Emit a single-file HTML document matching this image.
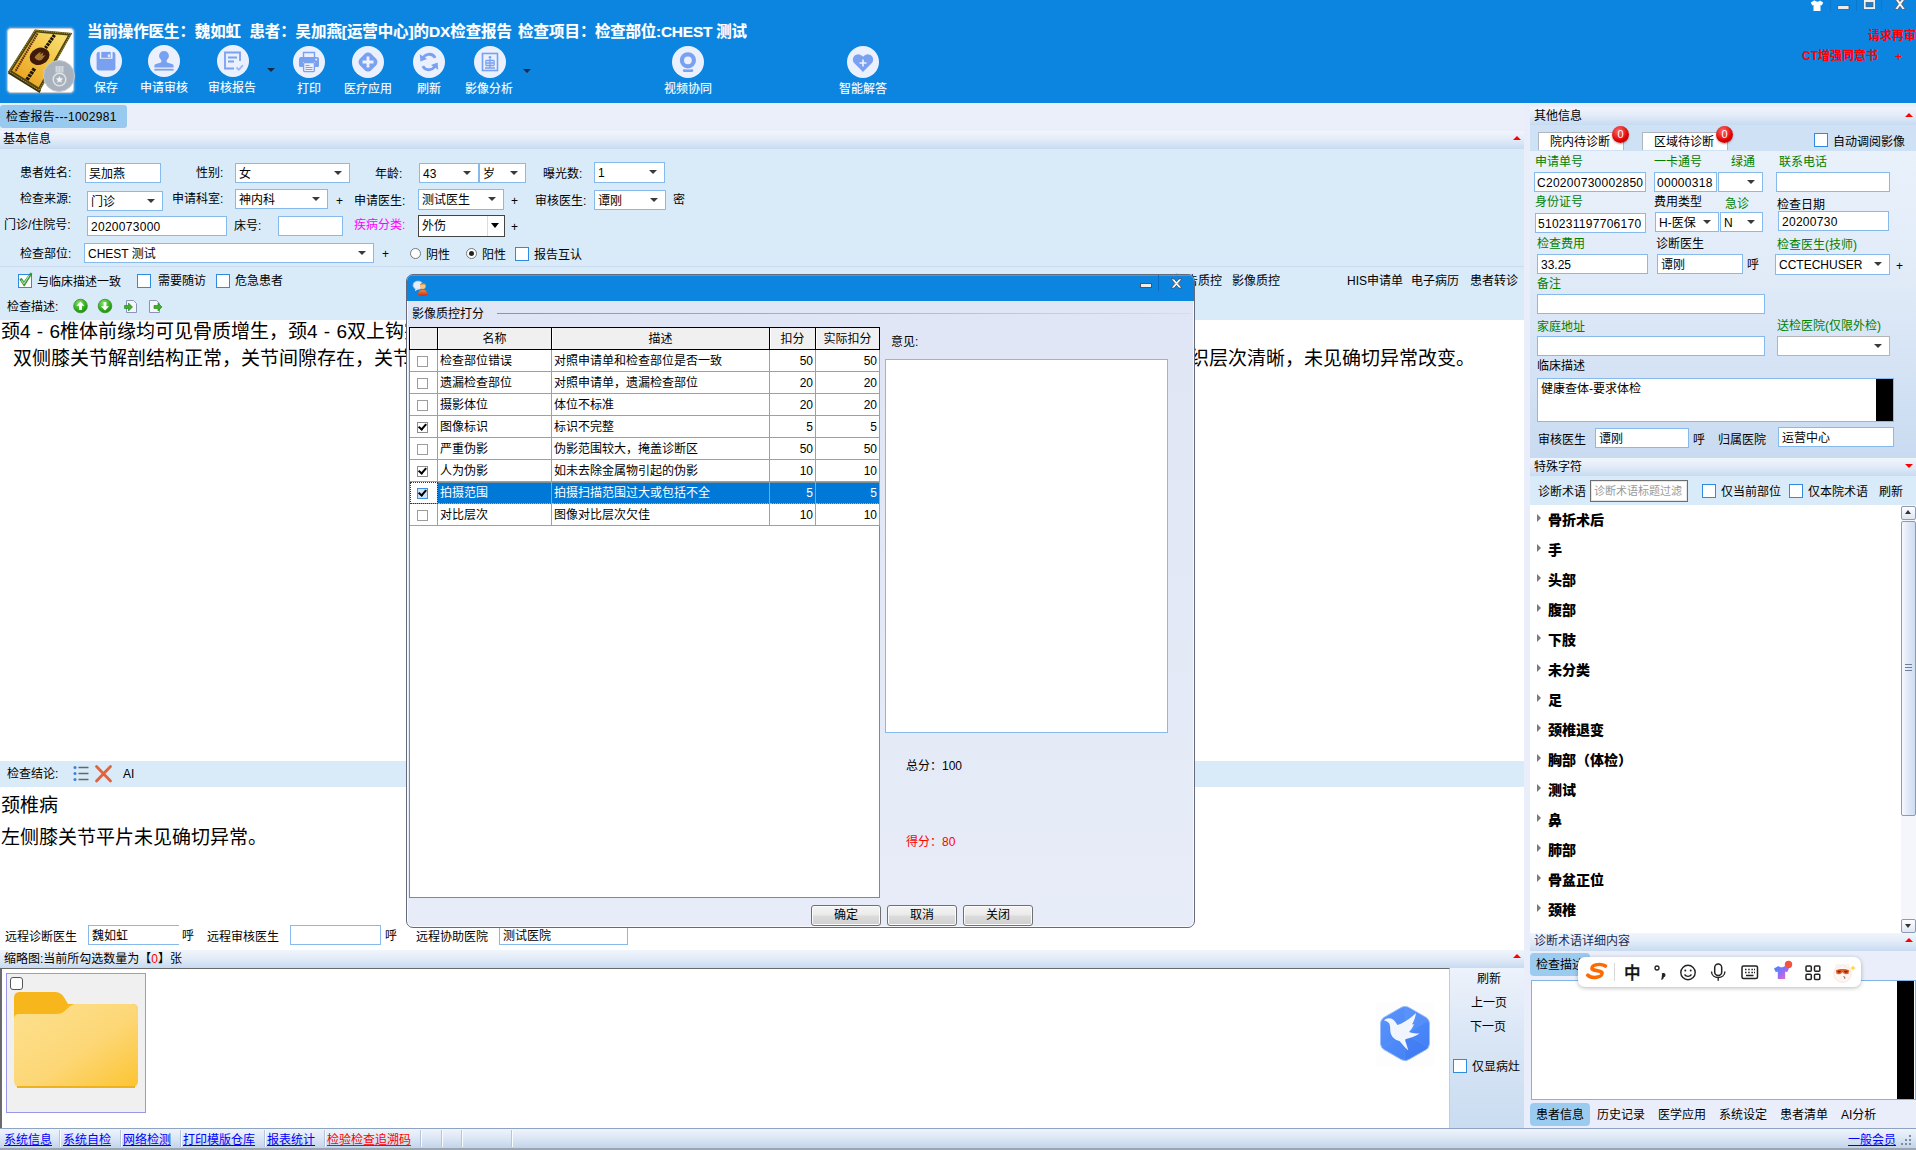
<!DOCTYPE html>
<html lang="zh-CN">
<head>
<meta charset="utf-8">
<title>检查报告</title>
<style>
html,body{margin:0;padding:0}
body{width:1916px;height:1150px;position:relative;overflow:hidden;background:#fff;font:12px/16px "Liberation Sans","Noto Sans CJK SC",sans-serif;color:#000}
div,span{box-sizing:border-box}
.a{position:absolute}
.t{position:absolute;white-space:nowrap;line-height:16px;font-size:12px;padding-top:1px}
.i{position:absolute;background:#fff;border:1px solid #86b9ec;height:20px;line-height:20px;padding-left:3px;white-space:nowrap;overflow:hidden;font-size:12px}
.c::after{content:"";position:absolute;right:7px;top:7px;border-left:4px solid transparent;border-right:4px solid transparent;border-top:4px solid #3a3a3a}
.k{position:absolute;width:14px;height:14px;background:#fff;border:1px solid #2f8be0}
.h{position:absolute;background:linear-gradient(#f1f5fc,#e3ecf8 45%,#c7dbf1);height:19px}
.up{position:absolute;width:0;height:0;border-left:4px solid transparent;border-right:4px solid transparent;border-bottom:4px solid #f00}
.dn{position:absolute;width:0;height:0;border-left:4px solid transparent;border-right:4px solid transparent;border-top:4px solid #f00}
.g{color:#008000}
.d{letter-spacing:.28px}
.w{color:#fff}
.tb{position:absolute;top:45px;width:32px;height:32px}
.tl{position:absolute;top:80px;width:80px;text-align:center;color:#fff;font-size:12px;line-height:16px;white-space:nowrap;text-shadow:0 0 1px rgba(255,255,255,.35)}
.big{position:absolute;white-space:nowrap;font-size:19px;line-height:26px;word-spacing:1px}
</style>
</head>
<body>
<!-- ===== HEADER ===== -->
<div class="a" id="hdr" style="left:0;top:0;width:1916px;height:103px;background:#0b85e0"></div>
<!-- logo -->
<div class="a" style="left:7px;top:28px;width:67px;height:65px;background:#fff;border-radius:4px;border:1px solid #c9ccd2;box-shadow:0 0 2px 1px rgba(255,255,255,.3)"></div>
<svg class="a" style="left:8px;top:28px" width="66" height="65" viewBox="0 0 66 65">
<defs><linearGradient id="cg" x1="1" y1="0" x2="0" y2="1"><stop offset="0" stop-color="#f9e27a"/><stop offset=".45" stop-color="#f3c544"/><stop offset="1" stop-color="#e7991a"/></linearGradient></defs>
<polygon points="0,45.500 31.600,65 33,62 1,42.500" fill="#3a2f08"/>
<polygon points="26.800,1.400 64.300,4.900 31.600,63.600 0,43.800" fill="#4f4410"/>
<polygon points="27.300,2.400 63,5.700 31.200,62.300 1.300,43.500" fill="none" stroke="#d9c04a" stroke-width=".7" stroke-dasharray="1.200 1"/>
<polygon points="28.600,4.600 59.800,7.500 30.600,59.300 4,42.800" fill="url(#cg)"/>
<path d="M29.500 5.500L7.200 43.500" stroke="#5a2a12" stroke-width="2.200" stroke-dasharray="1.600 .7"/>
<path d="M46.500 7L37.500 20" stroke="#1e1606" stroke-width="3.400" stroke-dasharray="2.600 .8"/>
<path d="M26.500 40.500L18.500 52.500" stroke="#1e1606" stroke-width="3.800" stroke-dasharray="2.800 .8"/>
<ellipse cx="31.600" cy="28.300" rx="10.300" ry="8.300" transform="rotate(-25 31.600 28.300)" fill="#3f1a08"/>
<path d="M26.500 29.500c2-3.500 4.500-5 6.500-5.500l-1 2.500 3.500-2-1 3.500 3-1-3.500 4.500c-2 1.500-5 1.500-7.500-2z" fill="#b98a3a" opacity=".85"/>
</svg>
<div class="a" style="left:43px;top:60px;width:32px;height:32px;border-radius:50%;background:#a9b1bc;border:1px solid #c3cbd6"></div>
<svg class="a" style="left:44px;top:60px" width="30" height="32" viewBox="0 0 30 32"><rect x="11.500" y="6" width="8" height="6.500" fill="#d3d8df"/><path d="M14 6v6M17 6v6" stroke="#b9c0ca" stroke-width=".8"/><circle cx="15.500" cy="19.500" r="6.300" fill="none" stroke="#dfe3e9" stroke-width="1.500"/><path d="M15.500 15.900l1.100 2.300 2.500.3-1.800 1.700.5 2.500-2.300-1.200-2.300 1.200.5-2.500-1.800-1.700 2.500-.3z" fill="#f1f3f6"/></svg>
<!-- title -->
<div class="t w" style="left:87px;top:20px;font-size:15.5px;line-height:22px;font-weight:bold;text-shadow:0 0 1px rgba(255,255,255,.4);letter-spacing:-.1px">当前操作医生：魏如虹&nbsp; 患者：吴加燕[运营中心]的DX检查报告</div>
<div class="t w" style="left:518px;top:20px;font-size:15.5px;line-height:22px;font-weight:bold;text-shadow:0 0 1px rgba(255,255,255,.4)">检查项目：</div>
<div class="t w" style="left:595px;top:20px;font-size:15.5px;line-height:22px;font-weight:bold;text-shadow:0 0 1px rgba(255,255,255,.4);letter-spacing:-.25px">检查部位:CHEST 测试</div>
<!-- toolbar icons -->
<svg class="tb" style="left:90px" viewBox="0 0 32 32"><circle cx="16" cy="16" r="16" fill="#eaf0fd"/><rect x="6.600" y="6.900" width="18.800" height="18.500" rx="2.200" fill="#7aa0f0"/><rect x="9.700" y="6" width="12.800" height="7.800" fill="#eaf0fd"/><rect x="11.300" y="6.900" width="9.400" height="5.900" fill="#7aa0f0"/><rect x="17.800" y="9.400" width="2.200" height="2.800" fill="#dfe8fc"/></svg>
<svg class="tb" style="left:148px" viewBox="0 0 32 32"><circle cx="16" cy="16" r="16" fill="#eaf0fd"/><path d="M16 6a4.8 4.8 0 0 1 3.2 8.4c-.9 1-.9 2.6.6 3.4l4.2 1.2c1 .3 1.6 1 1.6 2v1.6h-19.2v-1.6c0-1 .6-1.700 1.600-2l4.200-1.200c1.500-.8 1.500-2.400.6-3.400a4.800 4.800 0 0 1 3.200-8.400z" fill="#7aa0f0"/><rect x="6.4" y="23.8" width="19.200" height="1.800" fill="#7aa0f0"/></svg>
<svg class="tb" style="left:217px" viewBox="0 0 32 32"><circle cx="16" cy="16" r="16" fill="#eaf0fd"/><path d="M23 16v-8.500h-15v16h9" fill="none" stroke="#7aa0f0" stroke-width="1.800"/><path d="M11 12.500h9M11 16.500h6" stroke="#7aa0f0" stroke-width="1.800"/><path d="M19.500 22.500l2.300 2.300 4.200-4.600" fill="none" stroke="#9db8f6" stroke-width="1.800"/></svg>
<div class="a" style="left:267px;top:68px;width:0;height:0;border-left:4px solid transparent;border-right:4px solid transparent;border-top:4px solid #1a2a44"></div>
<svg class="tb" style="left:293px;top:46px" viewBox="0 0 32 32"><circle cx="16" cy="16" r="16" fill="#eaf0fd"/><path d="M10.500 11.500v-5h11v5" fill="none" stroke="#7aa0f0" stroke-width="1.400"/><path d="M8 11h16a2 2 0 0 1 2 2v6.500a1.500 1.500 0 0 1-1.500 1.500h-2.500v-5h-12v5h-2.500a1.500 1.500 0 0 1-1.500-1.500v-6.500a2 2 0 0 1 2-2z" fill="#7aa0f0"/><circle cx="23.200" cy="13.500" r="1" fill="#eaf0fd"/><rect x="10.600" y="16.600" width="10.800" height="9" rx="1" fill="none" stroke="#7aa0f0" stroke-width="1.300"/><path d="M12.500 19.500h4M12.500 21.500h7M12.500 23.500h7" stroke="#7aa0f0" stroke-width="1.100"/></svg>
<svg class="tb" style="left:352px;top:46px" viewBox="0 0 32 32"><circle cx="16" cy="16" r="16" fill="#eaf0fd"/><rect x="8" y="8" width="16" height="16" rx="4.500" transform="rotate(45 16 16)" fill="#7aa0f0"/><path d="M16 10.500v11M10.500 16h11" stroke="#eef2fe" stroke-width="2.800"/></svg>
<svg class="tb" style="left:413px;top:46px" viewBox="0 0 32 32"><circle cx="16" cy="16" r="16" fill="#eaf0fd"/><path d="M9.600 13.500a6.800 6.800 0 0 1 12.600-1.700" fill="none" stroke="#7aa0f0" stroke-width="2.800"/><path d="M22.400 18.500a6.800 6.800 0 0 1-12.600 1.700" fill="none" stroke="#7aa0f0" stroke-width="2.800"/><path d="M6.800 8.200l.6 7.300 6.600-2.600z" fill="#7aa0f0"/><path d="M25.200 23.800l-.6-7.300-6.600 2.600z" fill="#7aa0f0"/></svg>
<svg class="tb" style="left:474px;top:46px" viewBox="0 0 32 32"><circle cx="16" cy="16" r="16" fill="#eaf0fd"/><rect x="8.500" y="7.500" width="15" height="17" fill="none" stroke="#7aa0f0" stroke-width="1.600"/><circle cx="16" cy="11.300" r="1.300" fill="#7aa0f0"/><path d="M16 12.500v9M11.800 14.500h8.400M11.800 17h8.400M11.800 19.500h8.400M11 22h10" stroke="#7aa0f0" stroke-width="1.300"/><path d="M11.800 14.500v5M20.200 14.500v5" stroke="#7aa0f0" stroke-width="1.100"/></svg>
<div class="a" style="left:523px;top:69px;width:0;height:0;border-left:4px solid transparent;border-right:4px solid transparent;border-top:4px solid #1a2a44"></div>
<svg class="tb" style="left:672px;top:46px" viewBox="0 0 32 32"><circle cx="16" cy="16" r="16" fill="#eaf0fd"/><circle cx="15.900" cy="14.300" r="6" fill="none" stroke="#7aa0f0" stroke-width="4.200"/><path d="M10.900 24.200c0-.7.500-1.100 1.200-1 2.700.5 5.200.5 7.900 0 .7-.1 1.200.3 1.200 1v.6c0 .7-.5 1.200-1.200 1.200h-7.900c-.7 0-1.200-.5-1.200-1.200z" fill="#7aa0f0"/></svg>
<svg class="tb" style="left:847px;top:46px" viewBox="0 0 32 32"><circle cx="16" cy="16" r="16" fill="#eaf0fd"/><path d="M16 26l-8.600-8.800a5.300 5.300 0 0 1 7.500-7.500l1.100 1.100 1.100-1.100a5.300 5.300 0 0 1 7.500 7.500z" fill="#7aa0f0"/><path d="M16 13.500v7M12.500 17h7" stroke="#eef2fe" stroke-width="1.600"/></svg>
<div class="tl" style="left:66px">保存</div>
<div class="tl" style="left:124px">申请审核</div>
<div class="tl" style="left:192px">审核报告</div>
<div class="tl" style="left:269px;top:81px">打印</div>
<div class="tl" style="left:328px;top:81px">医疗应用</div>
<div class="tl" style="left:389px;top:81px">刷新</div>
<div class="tl" style="left:449px;top:81px">影像分析</div>
<div class="tl" style="left:648px;top:81px">视频协同</div>
<div class="tl" style="left:823px;top:81px">智能解答</div>
<!-- window controls -->
<svg class="a" style="left:1806px;top:0" width="110" height="14" viewBox="0 0 110 14"><path d="M8 0.500l-3.200 2 1.400 3 1.300-.6v6.100h7v-6.100l1.300.6 1.400-3-3.200-2c-.7 1.500-4.300 1.500-5 0z" fill="#fff"/><path d="M24.500 0v11M50.500 0v11M75.500 0v11" stroke="#0a78cc" stroke-width="1"/><rect x="31.700" y="5.500" width="11.300" height="4" fill="#ececec" stroke="#5a4f55" stroke-width=".8"/><rect x="58.700" y="1" width="9.600" height="7.200" fill="none" stroke="#f0f0f0" stroke-width="2.400"/><rect x="57.400" y="-.4" width="12.200" height="10" fill="none" stroke="#5a4f55" stroke-width=".7"/><rect x="60" y="2.300" width="7" height="4.600" fill="none" stroke="#5a4f55" stroke-width=".5"/><path d="M88.500 -1.500h3.200l2.300 3 2.300-3h3.200l-3.900 5.500 3.900 5.500h-3.200l-2.300-3.200-2.300 3.200h-3.200l3.900-5.500z" fill="#f6f6f6" stroke="#5a4f55" stroke-width=".8"/></svg>
<div class="t" style="left:1868px;top:27px;color:#f00;font-weight:bold">请求再审</div>
<div class="t" style="left:1802px;top:47px;color:#f00;font-weight:bold">CT增强同意书</div>
<div class="t" style="left:1895px;top:48px;color:#f00">+</div>
<!--HEADER-CONTENT-->
<!-- ===== LEFT MAIN ===== -->
<!-- lavender base behind panels -->
<div class="a" style="left:0;top:103px;width:1916px;height:1025px;background:#e9eefa"></div>
<!-- tab bar -->
<div class="a" style="left:0;top:103px;width:1524px;height:26px;background:#ebeffa"></div>
<div class="a" style="left:0;top:105px;width:127px;height:23px;background:#98c9ef;border-radius:3px"></div>
<div class="t" style="left:6px;top:108px;letter-spacing:.28px">检查报告---1002981</div>
<!-- 基本信息 header -->
<div class="h" style="left:0;top:131px;width:1524px;height:18px"></div>
<div class="t" style="left:3px;top:130px">基本信息</div>
<div class="up" style="left:1513px;top:136px"></div>
<!-- form bg -->
<div class="a" style="left:0;top:149px;width:1524px;height:171px;background:#d9ebf9"></div>
<div class="a" style="left:0;top:266px;width:1524px;height:2px;background:#cbdcf1"></div>
<div class="a" style="left:0;top:267px;width:1524px;height:53px;background:#d9ebf9"></div>
<!-- row 1 -->
<div class="t" style="left:20px;top:164px">患者姓名:</div>
<div class="i" style="left:85px;top:163px;width:76px">吴加燕</div>
<div class="t" style="left:196px;top:164px">性别:</div>
<div class="i c" style="left:235px;top:163px;width:115px">女</div>
<div class="t" style="left:375px;top:165px">年龄:</div>
<div class="i c" style="left:419px;top:163px;width:60px">43</div>
<div class="i c" style="left:479px;top:163px;width:47px">岁</div>
<div class="t" style="left:543px;top:165px">曝光数:</div>
<div class="i c" style="left:594px;top:162px;width:71px;height:21px">1</div>
<!-- row 2 -->
<div class="t" style="left:20px;top:190px">检查来源:</div>
<div class="i c" style="left:87px;top:191px;width:76px">门诊</div>
<div class="t" style="left:172px;top:190px">申请科室:</div>
<div class="i c" style="left:235px;top:189px;width:93px">神内科</div>
<div class="t" style="left:336px;top:192px">+</div>
<div class="t" style="left:354px;top:192px">申请医生:</div>
<div class="i c" style="left:418px;top:189px;width:86px;height:21px">测试医生</div>
<div class="t" style="left:511px;top:192px">+</div>
<div class="t" style="left:535px;top:192px">审核医生:</div>
<div class="i c" style="left:594px;top:190px;width:72px">谭刚</div>
<div class="t" style="left:673px;top:191px">密</div>
<!-- row 3 -->
<div class="t" style="left:4px;top:216px">门诊/住院号:</div>
<div class="i" style="left:87px;top:216px;width:140px;letter-spacing:.28px">2020073000</div>
<div class="t" style="left:234px;top:217px">床号:</div>
<div class="i" style="left:278px;top:216px;width:65px"></div>
<div class="t" style="left:354px;top:216px;color:#f0f">疾病分类:</div>
<div class="i" style="left:418px;top:215px;width:87px;height:22px;border-color:#444;line-height:20px">外伤<span class="a" style="right:0;top:0;width:17px;height:20px;border-left:1px solid #dcdcdc"></span><span class="a" style="right:5px;top:7px;border-left:4px solid transparent;border-right:4px solid transparent;border-top:5px solid #000"></span></div>
<div class="t" style="left:511px;top:218px">+</div>
<!-- row 4 -->
<div class="t" style="left:20px;top:245px">检查部位:</div>
<div class="i c" style="left:84px;top:243px;width:290px">CHEST 测试</div>
<div class="t" style="left:382px;top:245px">+</div>
<div class="a" style="left:410px;top:248px;width:11px;height:11px;border-radius:50%;background:#fff;border:1px solid #777"></div>
<div class="t" style="left:426px;top:246px">阴性</div>
<div class="a" style="left:466px;top:248px;width:11px;height:11px;border-radius:50%;background:#fff;border:1px solid #777"></div>
<div class="a" style="left:469px;top:251px;width:5px;height:5px;border-radius:50%;background:#222"></div>
<div class="t" style="left:482px;top:246px">阳性</div>
<div class="k" style="left:515px;top:247px"></div>
<div class="t" style="left:534px;top:246px">报告互认</div>
<!-- checkbox row -->
<div class="k" style="left:18px;top:274px"></div>
<svg class="a" style="left:18px;top:271px" width="16" height="17" viewBox="0 0 16 17"><path d="M1.800 8.500l1.800-1.200 2.300 3.600 6.600-9 1.500.8-7.800 12.500z" fill="#3aa536" stroke="#1f7a1f" stroke-width=".6"/><path d="M3.500 9.300l2.300 3.600 5.500-8.600" fill="none" stroke="#c9efc4" stroke-width=".9"/></svg>
<div class="t" style="left:37px;top:273px">与临床描述一致</div>
<div class="k" style="left:137px;top:274px"></div>
<div class="t" style="left:158px;top:272px">需要随访</div>
<div class="k" style="left:216px;top:274px"></div>
<div class="t" style="left:235px;top:272px">危急患者</div>
<div class="t" style="left:1174px;top:272px">报告质控</div>
<div class="t" style="left:1232px;top:272px">影像质控</div>
<div class="t" style="left:1347px;top:272px">HIS申请单</div>
<div class="t" style="left:1411px;top:272px">电子病历</div>
<div class="t" style="left:1470px;top:272px">患者转诊</div>
<!-- 检查描述 row -->
<div class="t" style="left:7px;top:298px">检查描述:</div>
<svg class="a" style="left:72px;top:297px" width="92" height="18" viewBox="0 0 92 18">
<defs><radialGradient id="gg" cx=".4" cy=".3" r=".8"><stop offset="0" stop-color="#8be26a"/><stop offset=".6" stop-color="#2fae1c"/><stop offset="1" stop-color="#1b7d10"/></radialGradient></defs>
<circle cx="8.500" cy="9" r="6.800" fill="url(#gg)" stroke="#3a8f2a" stroke-width=".8"/><path d="M8.500 4.500l4 4.200h-2.600v4.300h-2.800v-4.300h-2.600z" fill="#fff"/>
<circle cx="33" cy="9" r="6.800" fill="url(#gg)" stroke="#3a8f2a" stroke-width=".8"/><path d="M33 13.500l4-4.200h-2.600v-4.300h-2.800v4.300h-2.600z" fill="#fff"/>
<path d="M54.500 3.500h7l3 3v9h-10z" fill="#f4f6fb" stroke="#8a93b8" stroke-width="1"/><path d="M52.500 8.500h4v-2.500l4 4-4 4v-2.500h-4z" fill="#3fb02a" stroke="#1f7f14" stroke-width=".6"/>
<path d="M77.500 3.500h7l3 3v9h-10z" fill="#f4f6fb" stroke="#8a93b8" stroke-width="1"/><path d="M82 8.500h4v-2.500l4 4-4 4v-2.500h-4z" fill="#3fb02a" stroke="#1f7f14" stroke-width=".6"/>
</svg>
<!-- description text area -->
<div class="a" style="left:0;top:320px;width:1524px;height:441px;background:#fff"></div>
<div class="big" style="left:1px;top:319px">颈4 - 6椎体前缘均可见骨质增生，颈4 - 6双上钩突关节变尖，椎间隙未见明显狭窄，项韧带未见钙化。</div>
<div class="big" style="left:13px;top:346px">双侧膝关节解剖结构正常，关节间隙存在，关节面光滑，未见骨质增生及破坏征象。</div>
<div class="big" style="right:441px;top:346px">周围软组织层次清晰，未见确切异常改变。</div>
<!-- 检查结论 bar -->
<div class="a" style="left:0;top:761px;width:1524px;height:26px;background:#d9ebf9"></div>
<div class="t" style="left:7px;top:765px">检查结论:</div>
<svg class="a" style="left:72px;top:764px" width="42" height="20" viewBox="0 0 42 20"><circle cx="3" cy="3.500" r="1.500" fill="#3f7fd0"/><circle cx="3" cy="9.500" r="1.500" fill="#3f7fd0"/><circle cx="3" cy="15.500" r="1.500" fill="#3f7fd0"/><path d="M6.500 3.500h10M6.500 9.500h10M6.500 15.500h10" stroke="#666" stroke-width="1.400"/><path d="M24.500 2.500l14 14.500M38.500 2.500l-14 14.500" stroke="#e0623f" stroke-width="2.800" stroke-linecap="round"/></svg>
<div class="t" style="left:123px;top:765px">AI</div>
<!-- conclusion text -->
<div class="a" style="left:0;top:787px;width:1524px;height:133px;background:#fff"></div>
<div class="big" style="left:1px;top:793px">颈椎病</div>
<div class="big" style="left:1px;top:825px">左侧膝关节平片未见确切异常。</div>
<!-- remote row -->
<div class="a" style="left:0;top:920px;width:1524px;height:30px;background:#fff"></div>
<div class="t" style="left:5px;top:928px">远程诊断医生</div>
<div class="i" style="left:88px;top:925px;width:91px;border-right:none">魏如虹</div>
<div class="t" style="left:182px;top:927px">呼</div>
<div class="t" style="left:207px;top:928px">远程审核医生</div>
<div class="i" style="left:290px;top:925px;width:91px"></div>
<div class="t" style="left:385px;top:927px">呼</div>
<div class="t" style="left:416px;top:928px">远程协助医院</div>
<div class="i" style="left:499px;top:925px;width:129px">测试医院</div>
<!--LEFT-->
<!-- ===== RIGHT PANEL ===== -->
<!-- right panel bg -->
<div class="a" style="left:1530px;top:107px;width:386px;height:1021px;background:#e6eefa"></div>
<div class="a" style="left:1530px;top:151px;width:386px;height:307px;background:linear-gradient(#e9f1fb,#e1ebf8 40%,#c9dbf1)"></div>
<div class="h" style="left:1530px;top:107px;width:386px;height:18px"></div>
<div class="t" style="left:1534px;top:107px">其他信息</div>
<div class="up" style="left:1905px;top:113px"></div>
<div class="a" style="left:1530px;top:125px;width:386px;height:26px;background:#cfe2f5"></div>
<div class="a" style="left:1538px;top:132px;width:86px;height:18px;background:#fff;border:1px solid #adb5c0;border-bottom:none"></div>
<div class="t" style="left:1550px;top:133px">院内待诊断</div>
<div class="a" style="left:1642px;top:132px;width:86px;height:18px;background:#fff;border:1px solid #adb5c0;border-bottom:none"></div>
<div class="t" style="left:1654px;top:133px">区域待诊断</div>
<div class="a" style="left:1612px;top:126px;width:17px;height:17px;border-radius:50%;background:radial-gradient(circle at 40% 30%,#ff6a6a,#e00000 60%,#b00000);box-shadow:0 1px 2px rgba(0,0,0,.35);color:#fff;font-size:11px;line-height:16px;text-align:center">0</div>
<div class="a" style="left:1716px;top:126px;width:17px;height:17px;border-radius:50%;background:radial-gradient(circle at 40% 30%,#ff6a6a,#e00000 60%,#b00000);box-shadow:0 1px 2px rgba(0,0,0,.35);color:#fff;font-size:11px;line-height:16px;text-align:center">0</div>
<div class="k" style="left:1814px;top:133px"></div>
<div class="t" style="left:1833px;top:133px">自动调阅影像</div>
<!-- form -->
<div class="t g" style="left:1535px;top:153px">申请单号</div>
<div class="t g" style="left:1654px;top:153px">一卡通号</div>
<div class="t g" style="left:1731px;top:153px">绿通</div>
<div class="t g" style="left:1779px;top:153px">联系电话</div>
<div class="i d" style="left:1534px;top:172px;width:112px;padding-left:2px">C20200730002850</div>
<div class="i d" style="left:1654px;top:172px;width:63px;padding-left:2px">00000318</div>
<div class="i c" style="left:1718px;top:172px;width:45px"></div>
<div class="i" style="left:1776px;top:172px;width:114px"></div>
<div class="t g" style="left:1535px;top:193px">身份证号</div>
<div class="t" style="left:1654px;top:193px">费用类型</div>
<div class="t g" style="left:1725px;top:195px">急诊</div>
<div class="t" style="left:1777px;top:196px">检查日期</div>
<div class="i d" style="left:1535px;top:213px;width:111px;padding-left:2px">510231197706170</div>
<div class="i c" style="left:1655px;top:212px;width:64px">H-医保</div>
<div class="i c" style="left:1720px;top:212px;width:43px">N</div>
<div class="i" style="left:1778px;top:211px;width:111px;letter-spacing:.28px">20200730</div>
<div class="t g" style="left:1537px;top:235px">检查费用</div>
<div class="t" style="left:1656px;top:235px">诊断医生</div>
<div class="t g" style="left:1777px;top:236px">检查医生(技师)</div>
<div class="i" style="left:1537px;top:254px;width:111px">33.25</div>
<div class="i" style="left:1657px;top:254px;width:86px">谭刚</div>
<div class="t" style="left:1747px;top:256px">呼</div>
<div class="i c" style="left:1775px;top:254px;width:115px;height:21px">CCTECHUSER</div>
<div class="t" style="left:1896px;top:257px">+</div>
<div class="t g" style="left:1537px;top:275px">备注</div>
<div class="i" style="left:1537px;top:294px;width:228px"></div>
<div class="t g" style="left:1537px;top:318px">家庭地址</div>
<div class="t g" style="left:1777px;top:317px">送检医院(仅限外检)</div>
<div class="i" style="left:1537px;top:336px;width:228px"></div>
<div class="i c" style="left:1777px;top:336px;width:113px;border-color:#b4b4b4"></div>
<div class="t" style="left:1537px;top:357px">临床描述</div>
<div class="i" style="left:1537px;top:378px;width:357px;height:44px">健康查体-要求体检</div>
<div class="a" style="left:1876px;top:379px;width:17px;height:42px;background:#000"></div>
<div class="t" style="left:1538px;top:431px">审核医生</div>
<div class="i" style="left:1595px;top:428px;width:94px">谭刚</div>
<div class="t" style="left:1693px;top:431px">呼</div>
<div class="t" style="left:1718px;top:431px">归属医院</div>
<div class="i" style="left:1778px;top:427px;width:116px">运营中心</div>
<!-- 特殊字符 -->
<div class="h" style="left:1530px;top:458px;width:386px;height:18px"></div>
<div class="t" style="left:1534px;top:458px">特殊字符</div>
<div class="dn" style="left:1905px;top:464px"></div>
<div class="a" style="left:1530px;top:476px;width:386px;height:29px;background:#d9ebf9"></div>
<div class="t" style="left:1538px;top:483px">诊断术语</div>
<div class="i" style="left:1590px;top:480px;width:98px;height:22px;border:1px solid #6e6e6e;box-shadow:inset 0 0 0 1px #e6e6e6;color:#9a9a9a;line-height:20px;font-size:11px">诊断术语标题过滤</div>
<div class="k" style="left:1702px;top:484px"></div>
<div class="t" style="left:1721px;top:483px">仅当前部位</div>
<div class="k" style="left:1789px;top:484px"></div>
<div class="t" style="left:1808px;top:483px">仅本院术语</div>
<div class="t" style="left:1879px;top:483px">刷新</div>
<!-- tree -->
<div class="a" id="tree" style="left:1530px;top:505px;width:386px;height:428px;background:#fff;font-weight:bold;font-size:14px">
<style>#tree i{position:absolute;left:7px;width:0;height:0;border-top:4px solid transparent;border-bottom:4px solid transparent;border-left:4px solid #7a7a7a}#tree b{position:absolute;left:18px;white-space:nowrap;line-height:18px}</style>
<i style="top:9px"></i><b style="top:6px">骨折术后</b>
<i style="top:39px"></i><b style="top:36px">手</b>
<i style="top:69px"></i><b style="top:66px">头部</b>
<i style="top:99px"></i><b style="top:96px">腹部</b>
<i style="top:129px"></i><b style="top:126px">下肢</b>
<i style="top:159px"></i><b style="top:156px">未分类</b>
<i style="top:189px"></i><b style="top:186px">足</b>
<i style="top:219px"></i><b style="top:216px">颈椎退变</b>
<i style="top:249px"></i><b style="top:246px">胸部（体检）</b>
<i style="top:279px"></i><b style="top:276px">测试</b>
<i style="top:309px"></i><b style="top:306px">鼻</b>
<i style="top:339px"></i><b style="top:336px">肺部</b>
<i style="top:369px"></i><b style="top:366px">骨盆正位</b>
<i style="top:399px"></i><b style="top:396px">颈椎</b>
</div>
<!-- scrollbar -->
<div class="a" style="left:1901px;top:505px;width:15px;height:428px;background:#f4f6fb"></div>
<div class="a" style="left:1901px;top:506px;width:15px;height:14px;background:linear-gradient(#fdfdff,#dfe6f3);border:1px solid #8d9ab0;border-radius:2px"></div>
<div class="a" style="left:1905px;top:510px;width:0;height:0;border-left:3.500px solid transparent;border-right:3.500px solid transparent;border-bottom:4px solid #333"></div>
<div class="a" style="left:1901px;top:521px;width:15px;height:295px;background:linear-gradient(90deg,#f6f9fe,#dfe8f6 50%,#cfdcf0);border:1px solid #8d9ab0;border-radius:2px"></div>
<div class="a" style="left:1905px;top:664px;width:7px;height:1px;background:#6f7f99;box-shadow:0 3px 0 #6f7f99,0 6px 0 #6f7f99"></div>
<div class="a" style="left:1901px;top:919px;width:15px;height:14px;background:linear-gradient(#fdfdff,#dfe6f3);border:1px solid #8d9ab0;border-radius:2px"></div>
<div class="a" style="left:1905px;top:924px;width:0;height:0;border-left:3.500px solid transparent;border-right:3.500px solid transparent;border-top:4px solid #333"></div>
<!-- 诊断术语详细内容 -->
<div class="h" style="left:1530px;top:933px;width:386px;height:18px"></div>
<div class="t" style="left:1534px;top:932px;color:#1a2a55">诊断术语详细内容</div>
<div class="up" style="left:1905px;top:938px"></div>
<div class="a" style="left:1530px;top:951px;width:386px;height:177px;background:#e9eefa"></div>
<div class="a" style="left:1530px;top:953px;width:60px;height:23px;background:#9ccbf0;border-radius:4px"></div>
<div class="t" style="left:1536px;top:956px">检查描述</div>
<div class="a" style="left:1531px;top:980px;width:385px;height:120px;background:#fff;border:1px solid #7eb4ea"></div>
<div class="a" style="left:1897px;top:981px;width:17px;height:118px;background:#000"></div>
<div class="a" style="left:1530px;top:1103px;width:60px;height:23px;background:#9ccbf0;border-radius:4px"></div>
<div class="t" style="left:1536px;top:1106px">患者信息</div>
<div class="t" style="left:1597px;top:1106px">历史记录</div>
<div class="t" style="left:1658px;top:1106px">医学应用</div>
<div class="t" style="left:1719px;top:1106px">系统设定</div>
<div class="t" style="left:1780px;top:1106px">患者清单</div>
<div class="t" style="left:1841px;top:1106px">AI分析</div>
<!-- IME toolbar -->
<div class="a" style="left:1578px;top:957px;width:283px;height:30px;background:#fff;border-radius:7px;box-shadow:0 1px 4px rgba(0,0,0,.28)"></div>
<svg class="a" style="left:1578px;top:957px" width="283" height="30" viewBox="0 0 283 30">
<path d="M26 9.200c-2.200-1.600-7-2.200-10.500-1.200-3.600 1-3.600 4.200-.2 5l6.200 1.400c3.800.9 3.400 4.600-.8 5.600-3.900.9-8.600-.1-10.800-2" fill="none" stroke="#ff6a00" stroke-width="3.400" stroke-linecap="round" transform="translate(3.500 0) skewX(-12)"/>
<path d="M36.500 6v18" stroke="#d8d8d8" stroke-width="1"/>
<text x="46" y="21.500" font-family="Liberation Sans,Noto Sans CJK SC,sans-serif" font-size="16.500" font-weight="500" fill="#111" stroke="#111" stroke-width=".35">中</text>
<circle cx="79" cy="11" r="2" fill="none" stroke="#222" stroke-width="1.300"/><path d="M84 17.200a1.600 1.600 0 1 1 1.300 2.500c0 1.300-.8 2.300-1.800 2.800" fill="#222" stroke="#222" stroke-width="1.200"/>
<circle cx="110" cy="15.500" r="7.200" fill="none" stroke="#222" stroke-width="1.400"/><circle cx="107.300" cy="13.500" r="1" fill="#222"/><circle cx="112.700" cy="13.500" r="1" fill="#222"/><path d="M106.500 17.500c1.700 2.400 5.300 2.400 7 0" fill="none" stroke="#222" stroke-width="1.300"/>
<rect x="136.700" y="7" width="7" height="11.500" rx="3.500" fill="none" stroke="#222" stroke-width="1.500"/><path d="M133.500 14.500c0 8 13.400 8 13.400 0M140.200 20.500v3.200" fill="none" stroke="#222" stroke-width="1.400"/>
<rect x="164" y="9" width="15.500" height="12.500" rx="1.500" fill="none" stroke="#222" stroke-width="1.500"/><path d="M167 12.500h1.500M170.200 12.500h1.500M173.400 12.500h1.500M176 12.500h1M167 15.500h1.500M170.200 15.500h1.500M173.400 15.500h1.500M176 15.500h1M168 18.500h7.500" stroke="#222" stroke-width="1.300"/>
<defs><linearGradient id="sh" x1="0" y1="0" x2="1" y2="1"><stop offset="0" stop-color="#3a8bff"/><stop offset=".55" stop-color="#9a6cf5"/><stop offset="1" stop-color="#ff6fb0"/></linearGradient></defs>
<path d="M196 11.500l4.500-2.500c1.300 1.800 4.700 1.800 6 0l4.500 2.500-1.800 3.800-2-.9v7.600h-7.400v-7.600l-2 .9z" fill="url(#sh)"/><circle cx="210.500" cy="7.500" r="3.700" fill="#f4523b"/>
<rect x="228" y="9" width="5.300" height="5.300" rx="1" fill="none" stroke="#222" stroke-width="1.500"/><rect x="236.500" y="9" width="5.300" height="5.300" rx="1" fill="none" stroke="#222" stroke-width="1.500"/><rect x="228" y="17.200" width="5.300" height="5.300" rx="1" fill="none" stroke="#222" stroke-width="1.500"/><rect x="236.500" y="17.200" width="5.300" height="5.300" rx="1" fill="none" stroke="#222" stroke-width="1.500"/>
<circle cx="264.500" cy="16.500" r="8.800" fill="#fdf6f2" stroke="#f3e2dc" stroke-width=".8"/><path d="M257.500 11.500l1.500-4.500 4 2.500zM271.500 11.500l-1.500-4.500-4 2.500z" fill="#fdf6f2" stroke="#f3e2dc" stroke-width=".5"/><path d="M257.800 13.200c4-1.600 9.500-1.600 13.500 0l-.8 3.600c-1.800.8-3.800.6-5-.6l-1-1-1 1c-1.200 1.200-3.200 1.400-5 .6z" fill="#ea5f22"/><path d="M259.500 13.800h3.500l-.8 1.800h-2.200zM266 13.800h3.800l-.5 1.800h-2.500z" fill="#6a2a0e"/><path d="M265.500 19.500l1.500 1-.3 1.200" fill="none" stroke="#7a3a1a" stroke-width=".9"/><path d="M275 8l.9 2.100 2.100.9-2.100.9-.9 2.100-.9-2.100-2.100-.9 2.100-.9z" fill="#ffd84a"/>
</svg>
<!--RIGHT-->
<!-- ===== BOTTOM ===== -->
<!-- thumbnail header -->
<div class="h" style="left:0;top:950px;width:1524px;height:18px"></div>
<div class="t" style="left:4px;top:950px">缩略图:当前所勾选数量为【<span style="color:#f00">0</span>】张</div>
<div class="up" style="left:1513px;top:954px"></div>
<!-- thumbnail area -->
<div class="a" style="left:0;top:968px;width:1450px;height:160px;background:#fff;border-left:2px solid #6a6a6a;border-top:1px solid #6a6a6a;border-right:1px solid #c3ccd9"></div>
<div class="a" style="left:6px;top:973px;width:140px;height:140px;background:#f0f0f0;border:1px solid #9a96ea"></div>
<div class="a" style="left:10px;top:977px;width:13px;height:13px;background:#fff;border:1px solid #555;border-radius:3px"></div>
<svg class="a" style="left:14px;top:991px" width="125" height="98" viewBox="0 0 125 98">
<defs><linearGradient id="fd" x1="0" y1="0" x2="1" y2="1"><stop offset="0" stop-color="#fce08e"/><stop offset=".55" stop-color="#fdd776"/><stop offset="1" stop-color="#fcc431"/></linearGradient></defs>
<path d="M6 1h35c5 0 8 3 10 7l3 5h64c4 0 6 2 6 6v10h-124v-22c0-4 2-6 6-6z" fill="#f7b71c"/>
<path d="M0 28c0-3 2-5 5-5h37c5 0 8-2 11-5 3-3 5-5 10-5h54c4 0 7 2 7 6v71c0 4-3 7-7 7h-110c-4 0-7-3-7-7z" fill="url(#fd)"/>
<path d="M3 96h118" stroke="#eeb21f" stroke-width="2"/>
</svg>
<!-- right buttons column -->
<div class="a" style="left:1450px;top:968px;width:74px;height:160px;background:linear-gradient(#edf2fb,#dbe7f6 40%,#c9dcf1)"></div>
<div class="t" style="left:1477px;top:970px">刷新</div>
<div class="t" style="left:1471px;top:994px">上一页</div>
<div class="t" style="left:1470px;top:1018px">下一页</div>
<div class="k" style="left:1453px;top:1059px"></div>
<div class="t" style="left:1472px;top:1058px">仅显病灶</div>
<!-- bird icon -->
<svg class="a" style="left:1376px;top:1002px" width="58" height="64" viewBox="0 0 58 64">
<defs><linearGradient id="bh" x1="0" y1="0" x2="1" y2="1"><stop offset="0" stop-color="#5b95fb"/><stop offset="1" stop-color="#3f7df5"/></linearGradient></defs>
<rect x="0" y="0" width="58" height="64" fill="#fdfdfe"/>
<path d="M29 4.500c1.500 0 2.800.4 4 1.100l16.500 9.500c2.400 1.400 4 4 4 6.900v19c0 2.900-1.600 5.500-4 6.900l-16.500 9.500c-2.500 1.400-5.500 1.400-8 0l-16.500-9.500c-2.400-1.400-4-4-4-6.900v-19c0-2.900 1.600-5.500 4-6.900l16.500-9.500c1.200-.7 2.500-1.100 4-1.100z" fill="url(#bh)" stroke="#9bbdfb" stroke-width="1"/>
<path d="M29 5v27l24-14M29 32l-24-14M29 32v27M29 32l24 14M29 32l-24 14" fill="none" stroke="#6ea2fb" stroke-width=".5" opacity=".5"/><path d="M29 5l24 13-24 14z" fill="#6a9dfb" opacity=".35"/><path d="M29 32l24 14-24 13z" fill="#3a74ec" opacity=".3"/>
<path d="M8 18.500C10 16 14 15.500 17 17.500C19 19 20 21 21.500 23C28 21 35 16 40 11C39.500 15 38 19 36 22.500L38 22C37 25 35 28 33 30C36 31 40 31.500 43.500 31.500C40 34 35 36 30 37C29 37.500 29 38.500 29.500 39.500C30.500 42.500 31.500 45.500 32.300 48.500C29 45.500 26 42 23.500 39C19 38 15.500 35 14.500 30.500C14 27.500 14.500 24.500 13.500 22C13 20.500 11 19 8 18.500Z" fill="#f1f5fe"/>
</svg>
<!-- status bar -->
<div class="a" style="left:0;top:1128px;width:1916px;height:22px;background:linear-gradient(#eff4fc,#dbe6f5 50%,#c3d4ea);border-top:1px solid #8ea3c2;border-bottom:2px solid #9aa4b3"></div>
<div class="t" style="left:4px;top:1131px;color:#00f;text-decoration:underline">系统信息</div>
<div class="t" style="left:63px;top:1131px;color:#00f;text-decoration:underline">系统自检</div>
<div class="t" style="left:123px;top:1131px;color:#00f;text-decoration:underline">网络检测</div>
<div class="t" style="left:183px;top:1131px;color:#00f;text-decoration:underline">打印模版仓库</div>
<div class="t" style="left:267px;top:1131px;color:#00f;text-decoration:underline">报表统计</div>
<div class="t" style="left:327px;top:1131px;color:#f00;text-decoration:underline">检验检查追溯码</div>
<div class="a" style="left:59px;top:1130px;width:1px;height:17px;background:#b3c4dc;box-shadow:61px 0 0 #b3c4dc,121px 0 0 #b3c4dc,205px 0 0 #b3c4dc,265px 0 0 #b3c4dc,361px 0 0 #b3c4dc,382px 0 0 #b3c4dc,402px 0 0 #b3c4dc,452px 0 0 #b3c4dc"></div>
<div class="a" style="left:60px;top:1130px;width:1px;height:17px;background:#fafcff;box-shadow:61px 0 0 #fafcff,121px 0 0 #fafcff,205px 0 0 #fafcff,265px 0 0 #fafcff,361px 0 0 #fafcff,382px 0 0 #fafcff,402px 0 0 #fafcff,452px 0 0 #fafcff"></div>
<div class="t" style="left:1848px;top:1131px;color:#00f;text-decoration:underline">一般会员</div>
<svg class="a" style="left:1900px;top:1134px" width="14" height="14" viewBox="0 0 14 14"><g fill="#7d8ba3"><rect x="9" y="9" width="2" height="2"/><rect x="9" y="5" width="2" height="2"/><rect x="9" y="1" width="2" height="2"/><rect x="5" y="9" width="2" height="2"/><rect x="5" y="5" width="2" height="2"/><rect x="1" y="9" width="2" height="2"/></g></svg>
<!--BOTTOM-->
<!-- ===== DIALOG ===== -->
<div class="a" id="dlg" style="left:406px;top:274px;width:789px;height:654px;background:linear-gradient(#e0e5f5,#e7ecf8);border:1px solid #646a7a;border-radius:7px;overflow:hidden;box-shadow:inset 0 0 0 1px rgba(255,255,255,.75)">
<div class="a" style="left:0;top:0;width:789px;height:26px;background:#0b85e0;box-shadow:inset 0 1px 0 #3f9fe8"></div>
<div class="a" style="left:1px;top:0;width:786px;height:652px">
<!-- title icon -->
<svg class="a" style="left:4px;top:5px" width="18" height="16" viewBox="0 0 18 16"><defs><linearGradient id="pb" x1="0" y1="0" x2="0" y2="1"><stop offset="0" stop-color="#f08a3a"/><stop offset="1" stop-color="#c8301a"/></linearGradient></defs><ellipse cx="6" cy="5.200" rx="5" ry="4.200" fill="#e6ecf8" stroke="#a9b8d6" stroke-width=".6"/><path d="M3.500 8.500l-.5 2.800 3-2z" fill="#e6ecf8"/><circle cx="10.800" cy="6" r="2.900" fill="#f6c48c"/><path d="M8 5c.4-2.800 5.200-2.800 5.700 0-1.500-1-4.200-1-5.700 0z" fill="#b5701c"/><path d="M6 15c0-3.600 2-5.200 4.800-5.200s4.800 1.600 4.800 5.200c-2.500 1-7 1-9.600 0z" fill="url(#pb)"/></svg>
<!-- controls -->
<div class="a" style="left:732px;top:8px;width:12px;height:5px;background:#ececec;border:1px solid #5a4f55"></div>
<div class="a" style="left:750px;top:0;width:1px;height:16px;background:#0a6dc0"></div>
<svg class="a" style="left:762px;top:3px" width="13" height="11" viewBox="0 0 13 12" preserveAspectRatio="none"><path d="M1 1h3.200l2.300 3 2.300-3h3.200l-3.900 5 3.900 5h-3.200l-2.300-3-2.300 3h-3.200l3.900-5z" fill="#f4f4f4" stroke="#5a4f55" stroke-width=".9"/></svg>
<div class="t" style="left:4px;top:30px">影像质控打分</div>
<div class="a" style="left:89px;top:38px;width:694px;height:1px;background:linear-gradient(90deg,#5aa0e6,#8dbbea 50%,rgba(170,200,235,.25))"></div>
<!-- table panel -->
<div class="a" style="left:1px;top:52px;width:471px;height:571px;background:#fff;border:1px solid #828790"></div>
<div class="a" id="tb" style="left:1px;top:52px;width:473px;height:200px;font-size:12px">
<style>
#tb div{position:absolute;height:22px;line-height:20px;border-right:1px solid #a0a0a0;border-bottom:1px solid #a0a0a0;white-space:nowrap;padding:1px 2px 0 2px;background:#fff}
#tb .hd{background:#f0f0f0;text-align:center;border:1px solid #000;border-left:none;box-shadow:inset 1px 0 0 #fff;height:23px;line-height:20px;padding:1px 0 0 0}
#tb .n{text-align:right;padding-right:2px}
#tb .s{background:#0078d7;color:#fff;border-bottom:1px dotted #e0a060;box-shadow:inset 0 1px 0 rgba(224,160,96,.55)}
#tb u{position:absolute;left:7px;top:6px;width:9px;height:9px;border:1px solid #9c9c9c;background:#fff}
#tb u.on{border-color:#8c8c8c}
#tb u.sel{background:#cde4f7;border-color:#3c8fdf}
#tb u.on::after{content:"";position:absolute;left:2.300px;top:-.8px;width:2.600px;height:6px;border:solid #000;border-width:0 2.200px 2.200px 0;transform:rotate(40deg)}
</style>
<div class="hd" style="left:0px;top:0;width:29px;border-left:1px solid #000"></div>
<div class="hd" style="left:29px;top:0;width:114px">名称</div>
<div class="hd" style="left:143px;top:0;width:218px">描述</div>
<div class="hd" style="left:361px;top:0;width:46px">扣分</div>
<div class="hd" style="left:407px;top:0;width:64px">实际扣分</div>
<div style="left:1px;top:23px;width:28px"><u></u></div>
<div class="" style="left:29px;top:23px;width:114px">检查部位错误</div>
<div class="" style="left:143px;top:23px;width:218px">对照申请单和检查部位是否一致</div>
<div class="n" style="left:361px;top:23px;width:46px">50</div>
<div class="n" style="left:407px;top:23px;width:64px">50</div>
<div style="left:1px;top:45px;width:28px"><u></u></div>
<div class="" style="left:29px;top:45px;width:114px">遗漏检查部位</div>
<div class="" style="left:143px;top:45px;width:218px">对照申请单，遗漏检查部位</div>
<div class="n" style="left:361px;top:45px;width:46px">20</div>
<div class="n" style="left:407px;top:45px;width:64px">20</div>
<div style="left:1px;top:67px;width:28px"><u></u></div>
<div class="" style="left:29px;top:67px;width:114px">摄影体位</div>
<div class="" style="left:143px;top:67px;width:218px">体位不标准</div>
<div class="n" style="left:361px;top:67px;width:46px">20</div>
<div class="n" style="left:407px;top:67px;width:64px">20</div>
<div style="left:1px;top:89px;width:28px"><u class=on></u></div>
<div class="" style="left:29px;top:89px;width:114px">图像标识</div>
<div class="" style="left:143px;top:89px;width:218px">标识不完整</div>
<div class="n" style="left:361px;top:89px;width:46px">5</div>
<div class="n" style="left:407px;top:89px;width:64px">5</div>
<div style="left:1px;top:111px;width:28px"><u></u></div>
<div class="" style="left:29px;top:111px;width:114px">严重伪影</div>
<div class="" style="left:143px;top:111px;width:218px">伪影范围较大，掩盖诊断区</div>
<div class="n" style="left:361px;top:111px;width:46px">50</div>
<div class="n" style="left:407px;top:111px;width:64px">50</div>
<div style="left:1px;top:133px;width:28px"><u class=on></u></div>
<div class="" style="left:29px;top:133px;width:114px">人为伪影</div>
<div class="" style="left:143px;top:133px;width:218px">如未去除金属物引起的伪影</div>
<div class="n" style="left:361px;top:133px;width:46px">10</div>
<div class="n" style="left:407px;top:133px;width:64px">10</div>
<div style="left:1px;top:155px;width:28px;outline:1px dotted #333;outline-offset:-1px"><u class="on sel"></u></div>
<div class="s" style="left:29px;top:155px;width:114px">拍摄范围</div>
<div class="s" style="left:143px;top:155px;width:218px">拍摄扫描范围过大或包括不全</div>
<div class="n s" style="left:361px;top:155px;width:46px">5</div>
<div class="n s" style="left:407px;top:155px;width:64px">5</div>
<div style="left:1px;top:177px;width:28px"><u></u></div>
<div class="" style="left:29px;top:177px;width:114px">对比层次</div>
<div class="" style="left:143px;top:177px;width:218px">图像对比层次欠佳</div>
<div class="n" style="left:361px;top:177px;width:46px">10</div>
<div class="n" style="left:407px;top:177px;width:64px">10</div>
</div>
<div class="t" style="left:483px;top:58px">意见:</div>
<div class="a" style="left:477px;top:84px;width:283px;height:374px;background:#fff;border:1px solid #86b9ec"></div>
<div class="t" style="left:498px;top:482px">总分：100</div>
<div class="t" style="left:498px;top:558px;color:#f00">得分：80</div>
<!-- buttons -->
<style>.bt{position:absolute;top:630px;width:70px;height:21px;border:1px solid #707070;border-radius:3px;background:linear-gradient(#f4f4f4,#eaeaea 48%,#dcdcdc 52%,#cfcfcf);text-align:center;line-height:19px;font-size:12px;box-shadow:inset 0 0 0 1px #fbfbfb}</style>
<div class="bt" style="left:403px">确定</div>
<div class="bt" style="left:479px">取消</div>
<div class="bt" style="left:555px">关闭</div>
</div>
</div>
<!--DIALOG-->
</body>
</html>
